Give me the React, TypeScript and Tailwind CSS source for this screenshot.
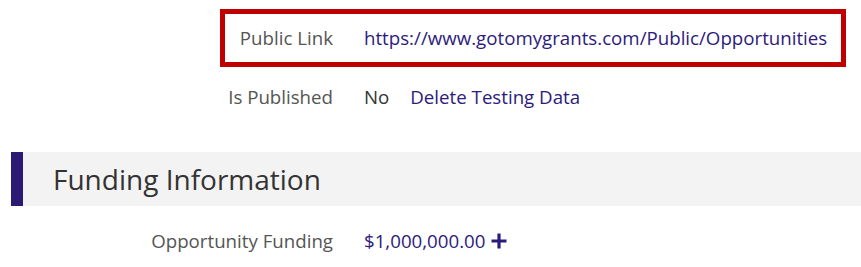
export default function App() {
  const font = { fontFamily: '"Open Sans", "Noto Sans", sans-serif' };
  return (
    <div className="w-[861px] h-[267px] bg-white overflow-hidden relative" style={font}>
      <div className="pt-[9px]">
        <div className="ml-[220px] w-[626px] h-[58px] border-[5px] border-[#c00000] flex items-center">
          <div className="w-[108px] text-right text-[18.7px] text-[#555555]">Public Link</div>
          <a className="ml-[31px] text-[18.7px] text-[#2d1b7c]">https://www.gotomygrants.com/Public/Opportunities</a>
        </div>
        <div className="flex items-center h-[44px] mt-[8px]">
          <div className="w-[333px] text-right text-[18.7px] text-[#555555]">Is Published</div>
          <div className="ml-[31px] text-[18.7px] text-[#333333]">No</div>
          <a className="ml-[21px] text-[18.7px] text-[#2d1b7c]">Delete Testing Data</a>
        </div>
        <div className="mt-[33px] ml-[11px] flex h-[54px]">
          <div className="w-[12px] bg-[#2a1a74]"></div>
          <div className="flex-1 bg-[#f3f3f3] flex items-center pl-[30px] text-[28px] text-[#333333]">
            Funding Information
          </div>
        </div>
        <div className="flex items-center h-[40px] mt-[15px]">
          <div className="w-[333px] text-right text-[18.7px] text-[#555555]">Opportunity Funding</div>
          <div className="ml-[31px] text-[18.7px] text-[#2d1b7c] flex items-center">
            $1,000,000.00
            <svg width="16" height="16" viewBox="0 0 16 16" className="ml-[6px]">
              <path d="M8 0.5v15M0.5 8h15" stroke="#2d1b7c" strokeWidth="3.2" />
            </svg>
          </div>
        </div>
      </div>
    </div>
  );
}
